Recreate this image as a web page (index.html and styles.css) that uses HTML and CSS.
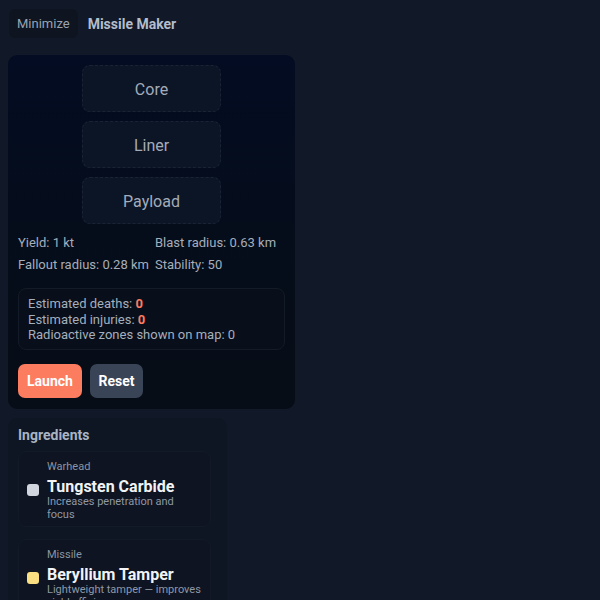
FILE: index.html
```html
<!DOCTYPE html>
<html>
<head>
<meta charset="utf-8">
<link rel="stylesheet" href="styles.css">
</head>
<body>
<header class="topbar">
  <button class="min-btn">Minimize</button>
  <span class="title">Missile Maker</span>
</header>
<section class="builder">
  <div class="slots">
    <div class="slot">Core</div>
    <div class="slot">Liner</div>
    <div class="slot">Payload</div>
  </div>
  <div class="stats">
    <div>Yield: 1 kt</div>
    <div>Blast radius: 0.63 km</div>
    <div>Fallout radius: 0.28 km</div>
    <div>Stability: 50</div>
  </div>
  <div class="info">
    <div>Estimated deaths: <b class="hot">0</b></div>
    <div>Estimated injuries: <b class="hot">0</b></div>
    <div>Radioactive zones shown on map: 0</div>
  </div>
  <div class="actions">
    <button class="btn launch">Launch</button>
    <button class="btn reset">Reset</button>
  </div>
</section>
<section class="ingredients">
  <h2>Ingredients</h2>
  <div class="card">
    <div class="cat">Warhead</div>
    <div class="row">
      <span class="swatch grey"></span>
      <div class="txt">
        <div class="name">Tungsten Carbide</div>
        <div class="desc">Increases penetration and focus</div>
      </div>
    </div>
  </div>
  <div class="card">
    <div class="cat">Missile</div>
    <div class="row">
      <span class="swatch yellow"></span>
      <div class="txt">
        <div class="name">Beryllium Tamper</div>
        <div class="desc">Lightweight tamper — improves yield efficiency</div>
      </div>
    </div>
  </div>
</section>
</body>
</html>
```
FILE: styles.css
```css
* { box-sizing: border-box; }
html, body { height: 100%; }
body {
  margin: 0;
  padding: 9px 0 0 8px;
  background: #111827;
  font-family: Roboto, "Liberation Sans", sans-serif;
  color: #a7b0bd;
  overflow: hidden;
}
.topbar {
  display: flex;
  align-items: center;
  gap: 10px;
  height: 29px;
}
.min-btn {
  font: 13px Roboto, sans-serif;
  color: #9aa3b1;
  background: #0e1520;
  border: none;
  border-radius: 6px;
  height: 29px;
  padding: 0 8px;
  margin-left: 1px;
}
.title {
  font-weight: 700;
  font-size: 14px;
  color: #b3bdcb;
}
.builder {
  margin-top: 17px;
  width: 287px;
  padding: 10px 10px 11px;
  border-radius: 9px;
  background: linear-gradient(180deg, #030c22 0%, #050d1b 50%, #070d16 100%);
}
.slots {
  display: flex;
  flex-direction: column;
  align-items: center;
  gap: 9px;
}
.slot {
  width: 139px;
  height: 47px;
  padding-top: 2px;
  display: flex;
  align-items: center;
  justify-content: center;
  border: 1px dashed rgba(148, 163, 184, 0.10);
  border-radius: 8px;
  background: #0c1526;
  font-size: 16px;
  color: #a3acb9;
}
.stats {
  display: grid;
  grid-template-columns: 137px 1fr;
  row-gap: 7px;
  margin-top: 11px;
  font-size: 13px;
  line-height: 15px;
  color: #a5aebb;
}
.info {
  margin-top: 16px;
  height: 62px;
  padding: 7px 9px;
  border: 1px solid #131b28;
  border-radius: 8px;
  background: #080f1b;
  font-size: 13px;
  line-height: 15.5px;
  color: #a5aebb;
}
.hot { color: #fb7d62; font-weight: 700; }
.actions {
  display: flex;
  gap: 8px;
  margin-top: 14px;
}
.btn {
  height: 34px;
  border: none;
  border-radius: 7px;
  font: 700 14px Roboto, sans-serif;
  color: #fff;
  padding: 0 8px;
}
.launch { background: #fb7c5f; width: 64px; }
.reset { background: #394457; width: 53px; }
.ingredients {
  margin-top: 9px;
  width: 219px;
  height: 200px;
  padding: 9px 16px 0 10px;
  border-radius: 9px 9px 0 0;
  background: #0f1623;
}
.ingredients h2 {
  margin: 0 0 7px;
  font-size: 14px;
  line-height: 17px;
  font-weight: 700;
  color: #a9b4c3;
}
.card {
  height: 76px;
  padding: 8px 2px 8px 8px;
  margin-bottom: 12px;
  border: 1px solid #121a27;
  border-radius: 8px;
  background: #0e1421;
}
.cat {
  font-size: 11px;
  line-height: 13px;
  color: #8b94a2;
  margin-left: 20px;
}
.row {
  display: flex;
  align-items: flex-start;
  gap: 8px;
  margin-top: 4px;
}
.swatch {
  width: 12px;
  height: 12px;
  border-radius: 3px;
  flex: none;
  margin-top: 7px;
}
.grey { background: #d1d5de; }
.yellow { background: #f9df82; }
.txt { width: 155px; }
.name {
  font-size: 16px;
  font-weight: 700;
  line-height: 19px;
  color: #f1f3f6;
}
.desc {
  font-size: 11px;
  line-height: 12.5px;
  color: #8f98a6;
}
```
